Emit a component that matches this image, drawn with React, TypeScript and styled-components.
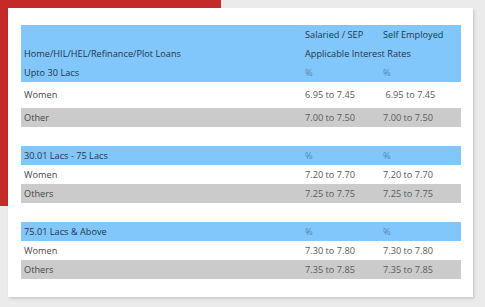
import React from "react";
import styled, { createGlobalStyle } from "styled-components";

const Global = createGlobalStyle`
  html, body { margin: 0; padding: 0; background: #ebebeb; }
  body { font-family: "Open Sans", "Liberation Sans", sans-serif; }
`;

const Page = styled.div`
  position: relative;
  width: 485px;
  height: 307px;
  padding: 8px 0 0 8px;
  box-sizing: border-box;
  background: #ebebeb;
  overflow: hidden;
`;

const RedCorner = styled.div`
  position: absolute;
  left: 0;
  top: 0;
  width: 221px;
  height: 206px;
  background: #c42a27;
`;

const Card = styled.div`
  position: relative;
  width: 465px;
  height: 289px;
  box-sizing: border-box;
  padding: 17px 12px 0 13px;
  background: #ffffff;
  box-shadow: 1px 1px 2px rgba(0, 0, 0, 0.12), 2px 3px 4px rgba(0, 0, 0, 0.05);
`;

const Table = styled.div`
  display: flex;
  flex-direction: column;
  width: 440px;
`;

const Row = styled.div<{ $tone: "blue" | "white" | "gray"; $h?: number }>`
  display: grid;
  grid-template-columns: 281px 78px 81px;
  align-items: center;
  height: ${(p) => p.$h ?? 19}px;
  background: ${(p) =>
    p.$tone === "blue" ? "#82c7fb" : p.$tone === "gray" ? "#cbcbcb" : "#ffffff"};
`;

const Spacer = styled.div`
  height: 19px;
`;

const Cell = styled.div<{ $kind?: "head" | "label" | "value" | "pct"; $span?: number }>`
  padding-left: 3px;
  font-size: 9.2px;
  line-height: 12px;
  white-space: pre;
  grid-column: ${(p) => (p.$span ? `span ${p.$span}` : "auto")};
  color: ${(p) =>
    p.$kind === "head"
      ? "#22354a"
      : p.$kind === "pct"
      ? "#4f86b3"
      : p.$kind === "value"
      ? "#5a5a5a"
      : "#474747"};
`;

type Group = {
  title: string;
  rows: { label: string; a: string; b: string }[];
};

const groups: Group[] = [
  {
    title: "30.01 Lacs - 75 Lacs",
    rows: [
      { label: "Women", a: "7.20 to 7.70", b: "7.20 to 7.70" },
      { label: "Others", a: "7.25 to 7.75", b: "7.25 to 7.75" },
    ],
  },
  {
    title: "75.01 Lacs & Above",
    rows: [
      { label: "Women", a: "7.30 to 7.80", b: "7.30 to 7.80" },
      { label: "Others", a: "7.35 to 7.85", b: "7.35 to 7.85" },
    ],
  },
];

export default function App() {
  return (
    <>
      <Global />
      <Page>
        <RedCorner />
        <Card>
          <Table>
            <Row $tone="blue">
              <Cell $kind="head" />
              <Cell $kind="head">Salaried / SEP</Cell>
              <Cell $kind="head">Self Employed</Cell>
            </Row>
            <Row $tone="blue">
              <Cell $kind="head">Home/HIL/HEL/Refinance/Plot Loans</Cell>
              <Cell $kind="head" $span={2}>Applicable Interest Rates</Cell>
            </Row>
            <Row $tone="blue">
              <Cell $kind="head">Upto 30 Lacs</Cell>
              <Cell $kind="pct">%</Cell>
              <Cell $kind="pct">%</Cell>
            </Row>
            <Row $tone="white" $h={26}>
              <Cell $kind="label">Women</Cell>
              <Cell $kind="value">6.95 to 7.45</Cell>
              <Cell $kind="value"> 6.95 to 7.45</Cell>
            </Row>
            <Row $tone="gray">
              <Cell $kind="label">Other</Cell>
              <Cell $kind="value">7.00 to 7.50</Cell>
              <Cell $kind="value">7.00 to 7.50</Cell>
            </Row>
            {groups.map((g) => (
              <React.Fragment key={g.title}>
                <Spacer />
                <Row $tone="blue">
                  <Cell $kind="head">{g.title}</Cell>
                  <Cell $kind="pct">%</Cell>
                  <Cell $kind="pct">%</Cell>
                </Row>
                {g.rows.map((r, i) => (
                  <Row key={r.label} $tone={i % 2 === 0 ? "white" : "gray"}>
                    <Cell $kind="label">{r.label}</Cell>
                    <Cell $kind="value">{r.a}</Cell>
                    <Cell $kind="value">{r.b}</Cell>
                  </Row>
                ))}
              </React.Fragment>
            ))}
          </Table>
        </Card>
      </Page>
    </>
  );
}
